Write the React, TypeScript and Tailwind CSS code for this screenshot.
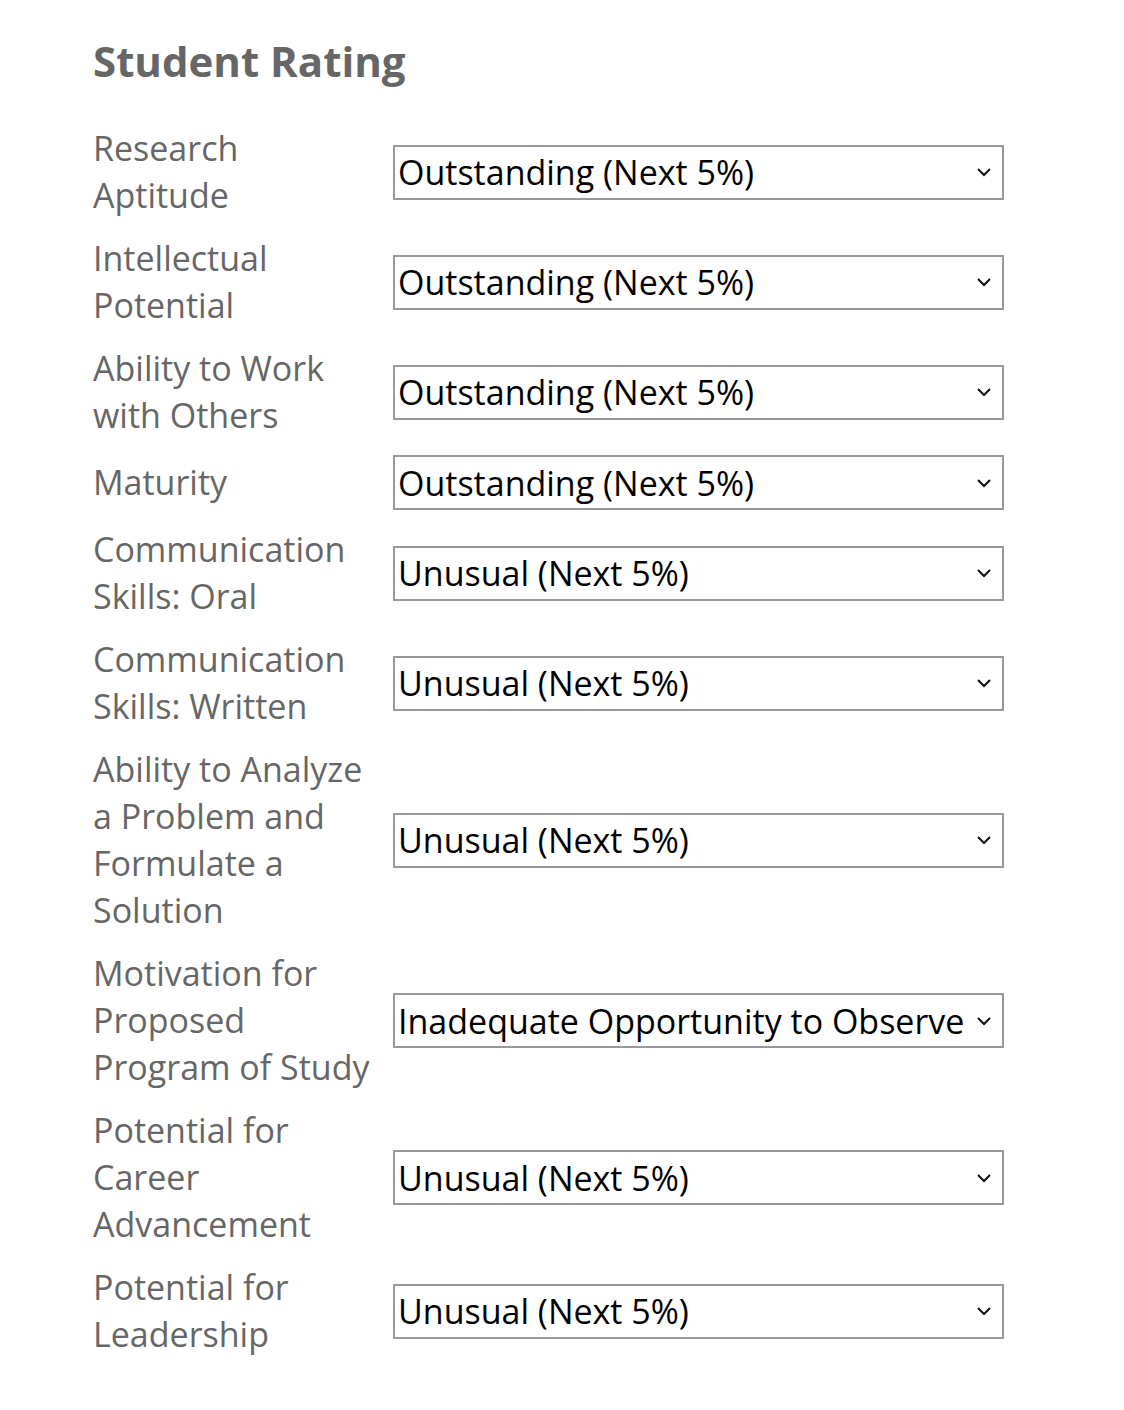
import React from "react";

const rows: [string, string][] = [
  ["Research Aptitude", "Outstanding (Next 5%)"],
  ["Intellectual Potential", "Outstanding (Next 5%)"],
  ["Ability to Work with Others", "Outstanding (Next 5%)"],
  ["Maturity", "Outstanding (Next 5%)"],
  ["Communication Skills: Oral", "Unusual (Next 5%)"],
  ["Communication Skills: Written", "Unusual (Next 5%)"],
  ["Ability to Analyze a Problem and Formulate a Solution", "Unusual (Next 5%)"],
  ["Motivation for Proposed Program of Study", "Inadequate Opportunity to Observe"],
  ["Potential for Career Advancement", "Unusual (Next 5%)"],
  ["Potential for Leadership", "Unusual (Next 5%)"],
];

function Chevron() {
  return (
    <svg width="16" height="10" viewBox="0 0 16 10" className="shrink-0">
      <path d="M2 2 L8 8 L14 2" fill="none" stroke="#111" strokeWidth="2" />
    </svg>
  );
}

export default function App() {
  return (
    <div className="bg-white min-h-[1410px] pl-[93px] pt-[33px]" style={{ fontFamily: '"Open Sans", sans-serif' }}>
      <h1 className="text-[42px] font-bold text-[#666] leading-[56px] m-0">Student Rating</h1>
      <div className="mt-[28px] flex flex-col">
        {rows.map(([label, value], i) => (
          <div key={i} className="flex items-center py-[8px]">
            <div className="w-[300px] pr-[18px] text-[34px] leading-[47px] text-[#666]">{label}</div>
            <div className="w-[611px] h-[55px] border-2 border-[#999] flex items-center justify-between pl-[3px] pr-[10px] text-black text-[34px]">
              <span className="whitespace-nowrap leading-none">{value}</span>
              <Chevron />
            </div>
          </div>
        ))}
      </div>
    </div>
  );
}
